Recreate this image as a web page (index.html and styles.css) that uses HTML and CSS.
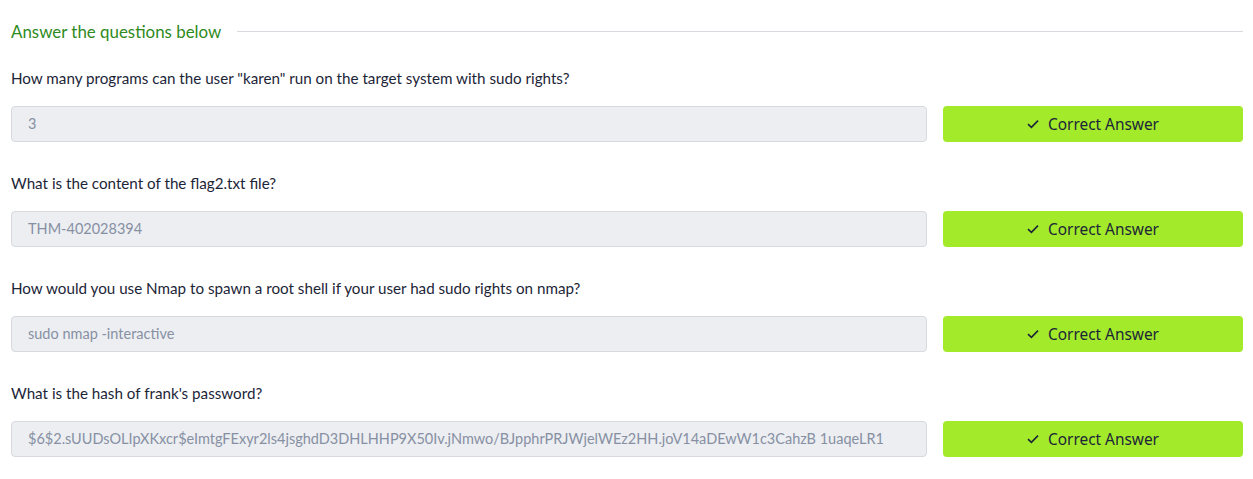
FILE: index.html
```html
<!DOCTYPE html>
<html>
<head>
<meta charset="utf-8">
<link rel="stylesheet" href="styles.css">
</head>
<body>
<div class="qa">
  <div class="qa-head">
    <span class="qa-title">Answer the questions below</span>
    <span class="qa-rule"></span>
  </div>

  <div class="q">
    <p class="q-text">How many programs can the user "karen" run on the target system with sudo rights?</p>
    <div class="q-row">
      <div class="q-input">3</div>
      <button class="q-btn"><svg class="chk" viewBox="0 0 12 10" width="12" height="10"><path d="M1 5.2 L4.4 8.4 L11 1.6" fill="none" stroke="#1c2538" stroke-width="1.6"/></svg>Correct Answer</button>
    </div>
  </div>

  <div class="q">
    <p class="q-text">What is the content of the flag2.txt file?</p>
    <div class="q-row">
      <div class="q-input">THM-402028394</div>
      <button class="q-btn"><svg class="chk" viewBox="0 0 12 10" width="12" height="10"><path d="M1 5.2 L4.4 8.4 L11 1.6" fill="none" stroke="#1c2538" stroke-width="1.6"/></svg>Correct Answer</button>
    </div>
  </div>

  <div class="q">
    <p class="q-text">How would you use Nmap to spawn a root shell if your user had sudo rights on nmap?</p>
    <div class="q-row">
      <div class="q-input">sudo nmap -interactive</div>
      <button class="q-btn"><svg class="chk" viewBox="0 0 12 10" width="12" height="10"><path d="M1 5.2 L4.4 8.4 L11 1.6" fill="none" stroke="#1c2538" stroke-width="1.6"/></svg>Correct Answer</button>
    </div>
  </div>

  <div class="q">
    <p class="q-text">What is the hash of frank's password?</p>
    <div class="q-row">
      <div class="q-input">$6$2.sUUDsOLIpXKxcr$eImtgFExyr2ls4jsghdD3DHLHHP9X50Iv.jNmwo/BJpphrPRJWjelWEz2HH.joV14aDEwW1c3CahzB 1uaqeLR1</div>
      <button class="q-btn"><svg class="chk" viewBox="0 0 12 10" width="12" height="10"><path d="M1 5.2 L4.4 8.4 L11 1.6" fill="none" stroke="#1c2538" stroke-width="1.6"/></svg>Correct Answer</button>
    </div>
  </div>
</div>
</body>
</html>
```
FILE: styles.css
```css
html, body {
  margin: 0;
  padding: 0;
  background: #ffffff;
}
.qa {
  width: 1232px;
  padding: 19px 0 0 11px;
  font-family: "Lato", "Liberation Sans", sans-serif;
}
.qa-head {
  display: flex;
  align-items: center;
  gap: 16px;
  height: 24px;
  margin-bottom: 23px;
}
.qa-title {
  color: #2f8a22;
  font-size: 16.9px;
  white-space: nowrap;
}
.qa-rule {
  flex: 1;
  height: 1px;
  background: #d7dade;
}
.q {
  margin-bottom: 29px;
}
.q-text {
  margin: 0 0 16px 0;
  height: 24px;
  line-height: 24px;
  font-size: 15.2px;
  color: #1c2538;
}
.q-row {
  display: flex;
  gap: 16px;
  height: 36px;
}
.q-input {
  flex: 1;
  box-sizing: border-box;
  border: 1px solid #d6d9de;
  border-radius: 4px;
  background: #eceef2;
  color: #8790a3;
  font-size: 14.5px;
  line-height: 34px;
  padding-left: 16px;
  white-space: nowrap;
  overflow: hidden;
}
.q-btn {
  width: 300px;
  flex: none;
  border: none;
  border-radius: 4px;
  background: #a3ea2a;
  color: #1c2538;
  font-family: "Noto Sans", "DejaVu Sans", sans-serif;
  font-size: 15.4px;
  display: flex;
  align-items: center;
  justify-content: center;
  gap: 9px;
  padding: 0;
}
.chk {
  display: block;
}
```
